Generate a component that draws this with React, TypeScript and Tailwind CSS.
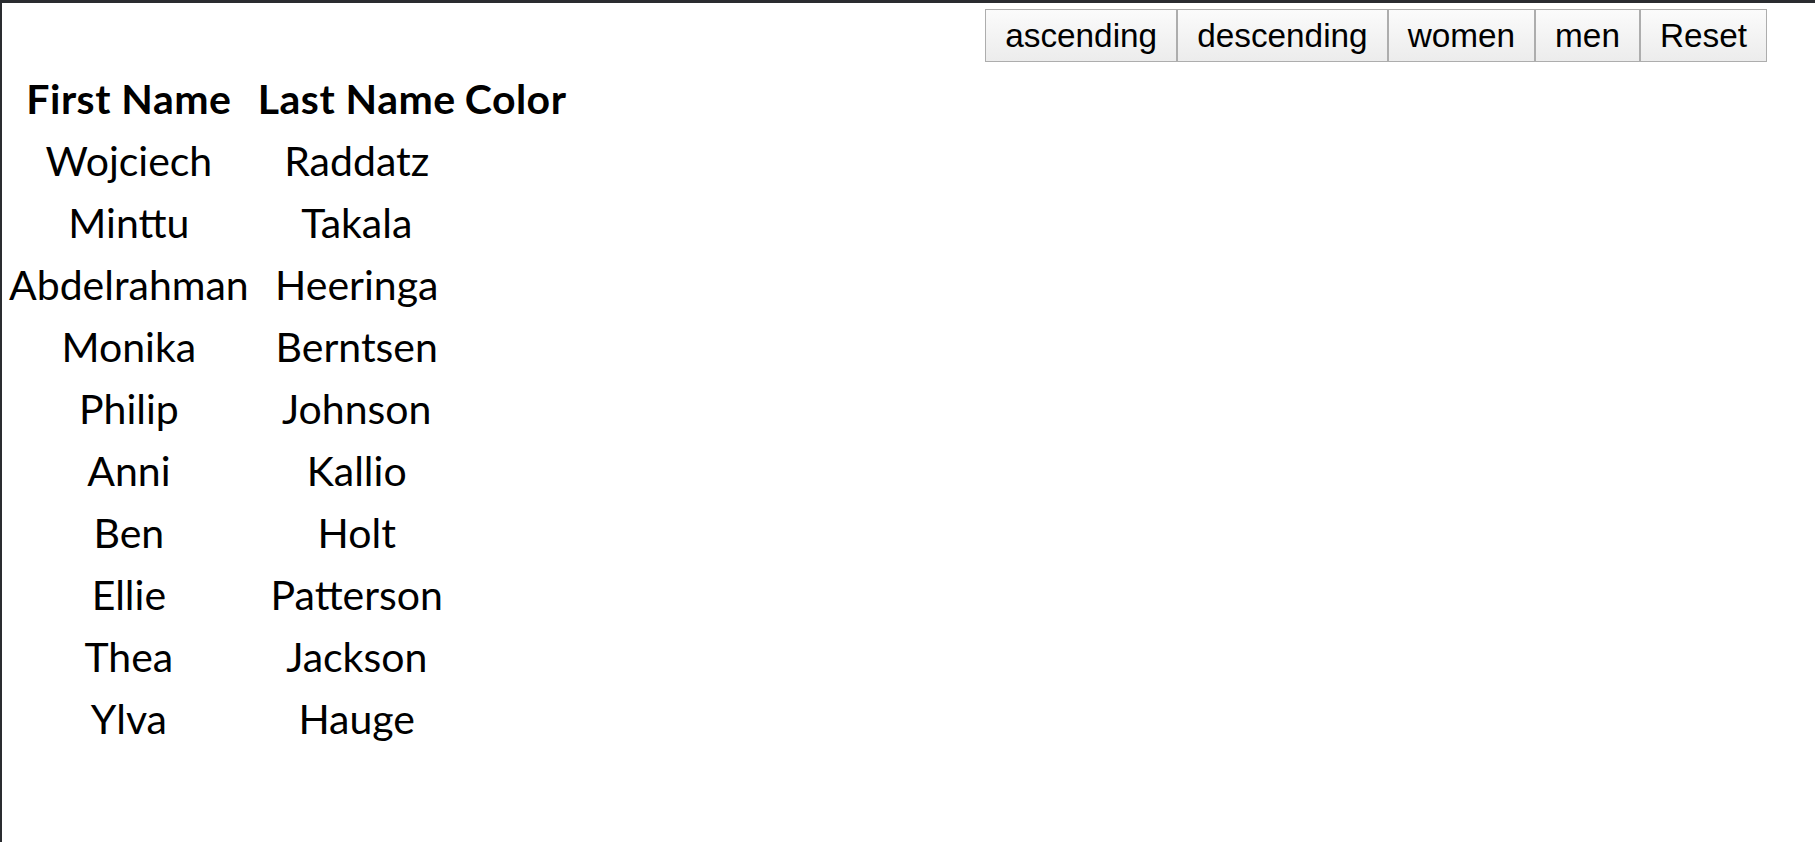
import { useState } from "react";

type Person = { first: string; last: string; gender: "f" | "m" };

const people: Person[] = [
    { first: "Wojciech", last: "Raddatz", gender: "m" },
    { first: "Minttu", last: "Takala", gender: "f" },
    { first: "Abdelrahman", last: "Heeringa", gender: "m" },
    { first: "Monika", last: "Berntsen", gender: "f" },
    { first: "Philip", last: "Johnson", gender: "m" },
    { first: "Anni", last: "Kallio", gender: "f" },
    { first: "Ben", last: "Holt", gender: "m" },
    { first: "Ellie", last: "Patterson", gender: "f" },
    { first: "Thea", last: "Jackson", gender: "f" },
    { first: "Ylva", last: "Hauge", gender: "f" },
];

export default function App() {
    const [rows, setRows] = useState<Person[]>(people);

    const buttons = [
        { label: "ascending", action: () => setRows([...rows].sort((a, b) => a.first.localeCompare(b.first))) },
        { label: "descending", action: () => setRows([...rows].sort((a, b) => b.first.localeCompare(a.first))) },
        { label: "women", action: () => setRows(people.filter((p) => p.gender === "f")) },
        { label: "men", action: () => setRows(people.filter((p) => p.gender === "m")) },
        { label: "Reset", action: () => setRows(people) },
    ];

    return (
        <div className="h-[842px] w-full overflow-hidden bg-white border-t-[3px] border-l-2 border-[#2a2c30]">
            {/* Controls */}
            <div className="flex justify-end pt-[6px] pr-[48px]">
                {buttons.map((b) => (
                    <button
                        key={b.label}
                        onClick={b.action}
                        className="h-[53px] px-[19px] border border-[#adadad] bg-linear-to-b from-[#fbfbfb] to-[#ececec] text-[33.33px] text-black font-['Liberation_Sans',Arial,sans-serif]"
                    >
                        {b.label}
                    </button>
                ))}
            </div>

            {/* People table */}
            <table className="border-separate border-spacing-[5px] mt-[3px] text-[41px] leading-[53px] text-black font-['Lato','Segoe_UI',sans-serif]">
                <thead>
                    <tr>
                        <th className="px-[2px] py-[2px] font-bold tracking-[0.5px]">First Name</th>
                        <th className="px-[2px] py-[2px] font-bold tracking-[0.5px]">Last Name</th>
                        <th className="px-[2px] py-[2px] font-bold tracking-[0.5px]">Color</th>
                    </tr>
                </thead>
                <tbody>
                    {rows.map((p) => (
                        <tr key={p.first}>
                            <td className="px-[2px] py-[2px] text-center">{p.first}</td>
                            <td className="px-[2px] py-[2px] text-center">{p.last}</td>
                            <td className="px-[2px] py-[2px]"></td>
                        </tr>
                    ))}
                </tbody>
            </table>
        </div>
    );
}
